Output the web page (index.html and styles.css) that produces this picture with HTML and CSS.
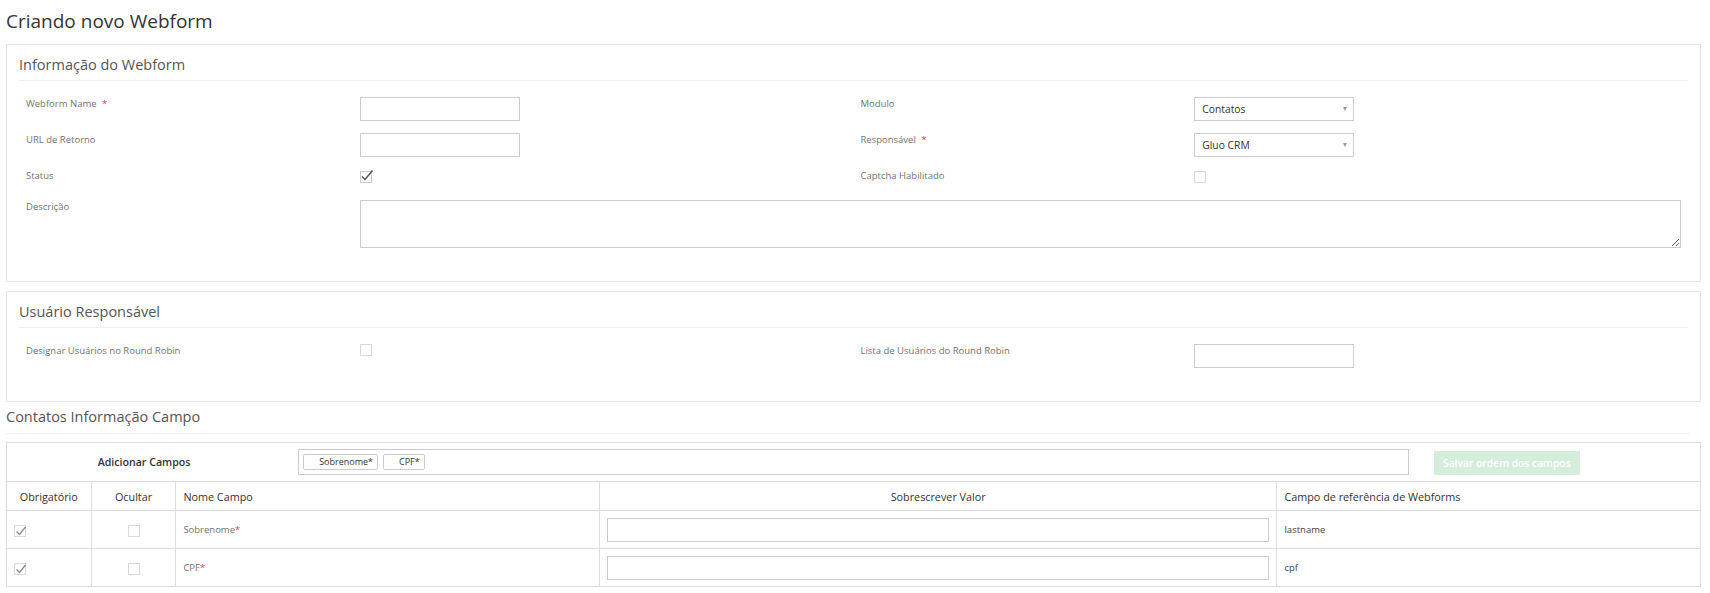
FILE: index.html
```html
<!DOCTYPE html>
<html lang="pt-BR">
<head>
<meta charset="utf-8">
<title>Criando novo Webform</title>
<link rel="stylesheet" href="styles.css">
</head>
<body>
<div class="page">
  <h1 class="page-title">Criando novo Webform</h1>

  <section class="panel">
    <h2 class="panel-heading">Informação do Webform</h2>
    <div class="form-grid">
      <div class="lbl">Webform Name <span class="req req-gap">*</span></div>
      <div class="fld"><input class="text" type="text"></div>
      <div class="lbl">Modulo</div>
      <div class="fld"><div class="select">Contatos<span class="caret"></span></div></div>

      <div class="lbl">URL de Retorno</div>
      <div class="fld"><input class="text" type="text"></div>
      <div class="lbl">Responsável <span class="req req-gap">*</span></div>
      <div class="fld"><div class="select">Gluo CRM<span class="caret"></span></div></div>

      <div class="lbl">Status</div>
      <div class="fld fld-check"><span class="cb cb-dark"><svg viewBox="0 0 14 14" class="tick"><path d="M2 7.5 L5 10.5 L12.5 1.5"/></svg></span></div>
      <div class="lbl">Captcha Habilitado</div>
      <div class="fld fld-check"><span class="cb"></span></div>

      <div class="lbl">Descrição</div>
      <div class="fld fld-wide"><textarea class="area"></textarea></div>
    </div>
  </section>

  <section class="panel">
    <h2 class="panel-heading">Usuário Responsável</h2>
    <div class="form-grid">
      <div class="lbl">Designar Usuários no Round Robin</div>
      <div class="fld"><span class="cb"></span></div>
      <div class="lbl">Lista de Usuários do Round Robin</div>
      <div class="fld"><input class="text" type="text"></div>
    </div>
  </section>

  <h3 class="block-heading">Contatos Informação Campo</h3>

  <table class="fields">
    <colgroup>
      <col class="w5"><col class="w5"><col class="w25"><col class="w40"><col class="w25">
    </colgroup>
    <tr>
      <td colspan="5" class="toolbar-cell">
        <div class="toolbar">
          <div class="toolbar-label">Adicionar Campos</div>
          <div class="tags">
            <span class="tag">Sobrenome*</span>
            <span class="tag">CPF*</span>
          </div>
          <div class="toolbar-action"><button class="btn-save" type="button">Salvar ordem dos campos</button></div>
        </div>
      </td>
    </tr>
    <tr class="head">
      <th class="center">Obrigatório</th>
      <th class="center">Ocultar</th>
      <th>Nome Campo</th>
      <th class="center">Sobrescrever Valor</th>
      <th>Campo de referência de Webforms</th>
    </tr>
    <tr class="row">
      <td><span class="cb cb-light"><svg viewBox="0 0 14 14" class="tick"><path d="M2.5 7.5 L5.5 10.5 L11.5 3"/></svg></span></td>
      <td class="center"><span class="cb"></span></td>
      <td class="name">Sobrenome<span class="req">*</span></td>
      <td><input class="text text-full" type="text"></td>
      <td class="ref">lastname</td>
    </tr>
    <tr class="row">
      <td><span class="cb cb-light"><svg viewBox="0 0 14 14" class="tick"><path d="M2.5 7.5 L5.5 10.5 L11.5 3"/></svg></span></td>
      <td class="center"><span class="cb"></span></td>
      <td class="name">CPF<span class="req">*</span></td>
      <td><input class="text text-full" type="text"></td>
      <td class="ref">cpf</td>
    </tr>
  </table>
</div>
</body>
</html>
```

FILE: styles.css
```css
html, body {
  margin: 0;
  padding: 0;
  background: #ffffff;
}

body {
  font-family: "Open Sans", "Noto Sans", "Liberation Sans", sans-serif;
  color: #333333;
}

.page {
  padding: 0 9px 0 6px;
}

.page-title {
  margin: 0 0 9px;
  padding-top: 7px;
  font-size: 19px;
  line-height: 28px;
  font-weight: 400;
  color: #333333;
}

.panel {
  border: 1px solid #e6e6e6;
  padding: 0 12px 12px;
}

.panel + .panel {
  margin-top: 9px;
}

.panel-heading {
  margin: 0;
  padding: 10px 0 5px;
  font-size: 14.5px;
  line-height: 20px;
  font-weight: 400;
  color: #555555;
  border-bottom: 1px solid #eeeeee;
}

.form-grid {
  display: grid;
  grid-template-columns: 20% 30% 20% 30%;
  margin: 9px 0 16px;
}

.lbl {
  padding: 6px 7px 4px;
  font-size: 9.5px;
  line-height: 16px;
  color: #737373;
}

.fld {
  padding: 7px 7px 5px;
  display: flex;
  align-items: flex-start;
}

.fld-check {
  padding-top: 9px;
  padding-bottom: 10px;
}

.fld-wide {
  grid-column: span 3;
}

.req {
  color: #e03c3c;
}

.req-gap {
  margin-left: 3px;
}

.text {
  box-sizing: border-box;
  width: 160px;
  height: 24px;
  border: 1px solid #cccccc;
  border-radius: 0;
  padding: 0 6px;
  margin: 0;
  font-family: inherit;
  font-size: 11px;
  background: #fff;
  outline: none;
}

.text-full {
  width: 100%;
}

.area {
  box-sizing: border-box;
  width: 100%;
  height: 48px;
  border: 1px solid #cccccc;
  margin: 0;
  padding: 4px 6px;
  font-family: inherit;
  font-size: 11px;
  display: block;
  outline: none;
}

.select {
  box-sizing: border-box;
  width: 160px;
  height: 24px;
  border: 1px solid #cccccc;
  padding: 0 0 0 7px;
  font-size: 10.3px;
  line-height: 22px;
  color: #333333;
  display: flex;
  align-items: center;
  justify-content: space-between;
}

.caret {
  width: 0;
  height: 0;
  border-left: 2.5px solid transparent;
  border-right: 2.5px solid transparent;
  border-top: 4px solid #999999;
  margin-right: 6px;
}

.cb {
  box-sizing: border-box;
  display: inline-block;
  position: relative;
  width: 12px;
  height: 12px;
  border: 1px solid #d9d9d9;
  background: #fff;
  vertical-align: middle;
}

.cb-dark {
  border-color: #cccccc;
}

.tick {
  position: absolute;
  left: -1px;
  top: -3px;
  width: 14px;
  height: 14px;
  overflow: visible;
}

.tick path {
  fill: none;
  stroke: #555555;
  stroke-width: 1.5;
}

.cb-light .tick {
  top: -2px;
  left: -1px;
}

.cb-light .tick path {
  stroke: #8a8a8a;
  stroke-width: 1.3;
}

.block-heading {
  margin: 5px 12px 8px 0;
  padding: 0 0 6px;
  font-size: 14.5px;
  line-height: 20px;
  font-weight: 400;
  color: #555555;
  border-bottom: 1px solid #eeeeee;
}

.fields {
  width: 100%;
  border-collapse: collapse;
  table-layout: fixed;
  font-size: 11px;
}

.w5 { width: 5%; }
.w25 { width: 25%; }
.w40 { width: 40%; }

.fields td,
.fields th {
  border: 1px solid #dddddd;
  padding: 0 7px;
  text-align: left;
  vertical-align: middle;
}

.fields .toolbar-cell {
  padding: 0;
}

.toolbar {
  display: grid;
  grid-template-columns: 2fr 8fr 2fr;
  align-items: center;
  height: 38px;
}

.toolbar-label {
  text-align: center;
  padding-right: 8px;
  font-size: 10.6px;
  font-weight: 600;
  color: #333333;
}

.tags {
  box-sizing: border-box;
  height: 26px;
  margin: 0 9px;
  border: 1px solid #cccccc;
  padding: 4px;
  display: flex;
  gap: 5px;
  align-items: flex-start;
}

.tag {
  box-sizing: border-box;
  height: 16px;
  border: 1px solid #cccccc;
  border-radius: 2px;
  padding: 0 4px 0 15px;
  font-size: 9px;
  line-height: 14px;
  color: #333333;
}

.toolbar-action {
  padding-left: 16px;
  display: flex;
  padding-top: 2px;
}

.btn-save {
  width: 146px;
  height: 24px;
  border: none;
  border-radius: 0;
  background: #d5eddb;
  color: #ffffff;
  font-family: inherit;
  font-size: 10.3px;
  font-weight: 600;
  padding: 0;
}

.fields .head th {
  height: 28px;
  font-weight: 400;
  color: #333333;
  font-size: 10.8px;
}

.fields .center,
.fields .head .center {
  text-align: center;
}

.fields .row td {
  height: 37px;
  padding-top: 0;
  padding-bottom: 0;
}

.fields .name {
  font-size: 9.5px;
  color: #737373;
}

.fields .ref {
  font-size: 9.5px;
  color: #444444;
}
```
